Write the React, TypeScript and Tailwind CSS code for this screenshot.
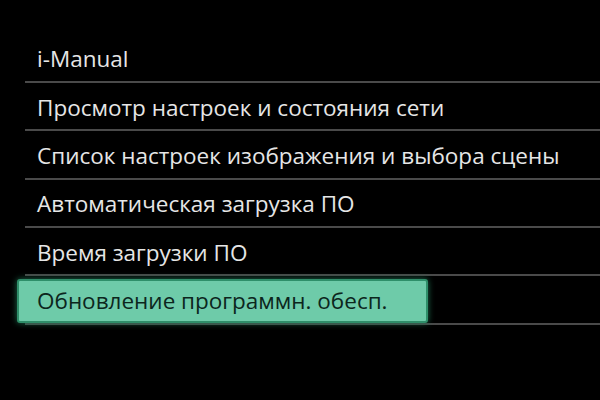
const ITEMS = [
  "i-Manual",
  "Просмотр настроек и состояния сети",
  "Список настроек изображения и выбора сцены",
  "Автоматическая загрузка ПО",
  "Время загрузки ПО",
]

export default function App() {
  return (
    <main
      className="w-[600px] h-[400px] bg-black overflow-hidden pt-[34.5px] pl-[25px]"
      style={{ fontFamily: '"Open Sans", "Noto Sans", sans-serif' }}
    >
      <div className="flex flex-col">
        {ITEMS.map((item) => (
          <div
            key={item}
            className="h-[48.4px] flex items-center pl-[12px] pt-[3px] border-b-2 border-[#4a4a4a] text-[22.5px] text-[#e6e6e6]"
          >
            {item}
          </div>
        ))}
        {/* Selected row */}
        <div className="h-[48.4px] flex items-center border-b-2 border-[#4a4a4a] pt-[2px]">
          <div className="-ml-[8px] w-[411px] h-[44px] flex items-center pl-[18px] pt-[1px] rounded-[3px] bg-[#6ecba9] border-2 border-[#2f8f6a] shadow-[0_0_6px_#1f6f50] text-[22.5px] text-[#0c261d]">
            Обновление программн. обесп.
          </div>
        </div>
      </div>
    </main>
  )
}
